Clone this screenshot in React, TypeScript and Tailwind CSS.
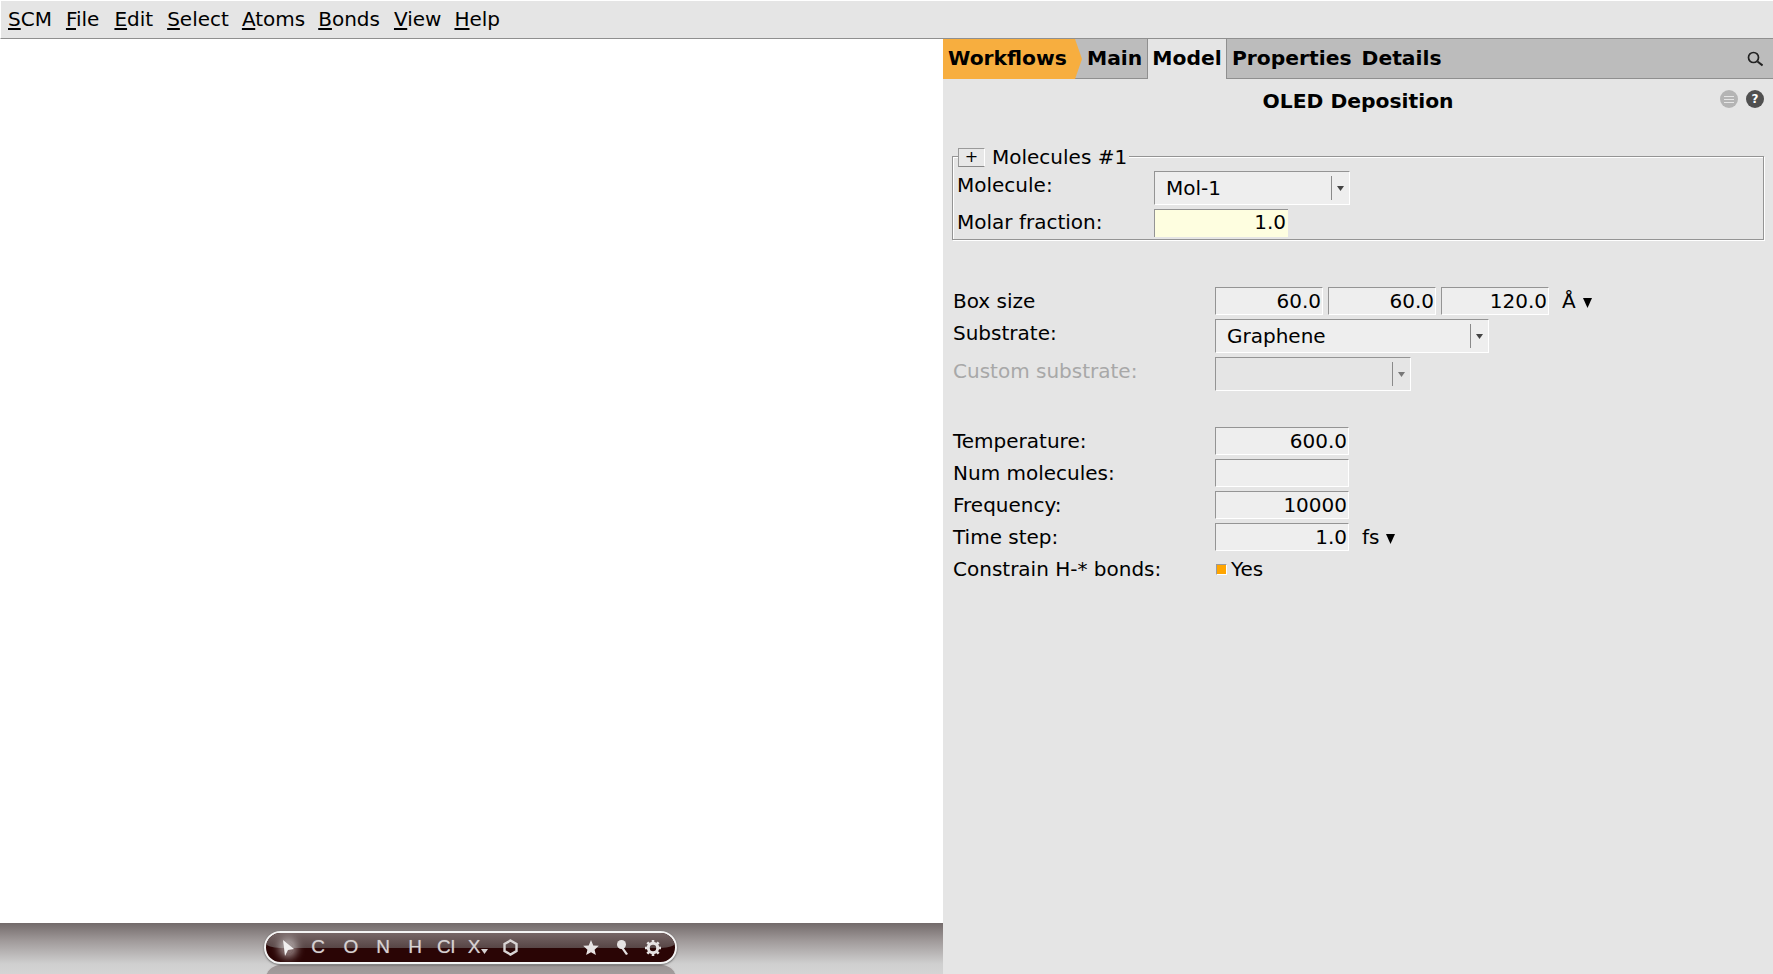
const menus = [
  ['S', 'CM', ''],
  ['F', 'ile', 'ml-[14px]'],
  ['E', 'dit', 'ml-[15px]'],
  ['S', 'elect', 'ml-[14px]'],
  ['A', 'toms', 'ml-[13px]'],
  ['B', 'onds', 'ml-[13px]'],
  ['V', 'iew', 'ml-[14px]'],
  ['H', 'elp', 'ml-[13px]'],
];

function TextField({ value, width = 'w-[134px]' }: { value?: string; width?: string }) {
  return (
    <div className={`${width} h-7 shrink-0 bg-[#eeeeee] border border-t-[#949494] border-l-[#949494] border-r-white border-b-white flex items-center justify-end pr-[1px]`}>
      {value}
    </div>
  );
}

function Combo({ value, width, disabled }: { value?: string; width: string; disabled?: boolean }) {
  return (
    <div className={`${width} h-[34px] shrink-0 border border-t-[#949494] border-l-[#949494] border-r-white border-b-white flex items-center ${disabled ? 'bg-[#e5e5e5]' : 'bg-[#eeeeee]'}`}>
      <span className="flex-1 pl-[11px] pb-[1px]">{value}</span>
      <div className="w-[18px] h-[24px] border-l border-[#8a8a8a] flex items-center justify-center">
        <svg width="7" height="5" viewBox="0 0 7 5"><path d="M0 0h7L3.500 5z" fill={disabled ? '#777777' : '#444444'} /></svg>
      </div>
    </div>
  );
}

function Row({ label, children }: { label: string; children?: React.ReactNode }) {
  return (
    <div className="flex items-center h-7 mb-1">
      <span className="w-[262px] shrink-0">{label}</span>
      {children}
    </div>
  );
}

function DownArrow({ ml }: { ml: string }) {
  return <svg className={`${ml} mt-[3px]`} width="9" height="10" viewBox="0 0 9 10"><path d="M0 0h9L4.500 10z" fill="#000000" /></svg>;
}

function Toolbar() {
  const atoms = [
    { t: 'C', ml: 'ml-[3px]' },
    { t: 'O', ml: 'ml-[5px]' },
    { t: 'N', ml: 'ml-[4px]' },
    { t: 'H', ml: 'ml-[4px]' },
    { t: 'Cl', ml: 'ml-[3px]' },
  ];
  return (
    <div className="h-[51px] mt-auto bg-[linear-gradient(180deg,#736a6a_0%,#a09a9a_35%,#cfcfcf_80%,#d4d4d4_100%)] flex justify-center pt-2 relative overflow-hidden">
      <div className="absolute left-[266px] top-[40px] w-[410px] h-[30px] rounded-[17px] border-t-2 border-[#d2d0d0] bg-[linear-gradient(180deg,#9b9494,#b0abab)]" />
      <div className="relative mr-[2px] w-[413px] h-[33px] rounded-[17px] border-2 border-[#f4f4f4] bg-[#2a0505] shadow-[0_1px_2px_rgba(0,0,0,0.5)] flex items-center pl-[9px] text-[#d6d2d2] text-[19px] font-['Liberation_Sans',sans-serif] overflow-hidden [text-shadow:0_0_1px_rgba(214,210,210,0.6)]">
        <div className="absolute inset-x-0 top-0 h-[15px] rounded-b-[14px_5px] bg-[linear-gradient(180deg,#766666_0%,#574545_100%)]" />
        <div className="relative w-[26px] flex justify-center">
          <div className="rounded-full shadow-[0_0_8px_4px_rgba(255,255,255,0.55)] bg-white/40 w-[10px] h-[12px] flex items-center justify-center">
            <svg width="14" height="16" viewBox="0 0 14 16" className="shrink-0"><path d="M2 0l11 9-6 1-3 6z" fill="#f2f0f0" /></svg>
          </div>
        </div>
        {atoms.map((a) => (
          <span key={a.t} className={`relative w-[28px] text-center ${a.ml}`}>{a.t}</span>
        ))}
        <span className="relative w-[28px] ml-[4px] flex justify-center items-center">
          X
          <svg className="mt-[8px] ml-[1px]" width="7" height="5" viewBox="0 0 7 5"><path d="M0 0h7L3.500 5z" fill="#d6d2d2" /></svg>
        </span>
        <span className="relative w-[28px] ml-[4px] flex justify-center">
          <svg width="15" height="17" viewBox="0 0 15 17"><path d="M7.500 1.500l6 3.500v7l-6 3.500-6-3.500V5z" fill="none" stroke="#d8d4d4" strokeWidth="2.400" /></svg>
        </span>
        <span className="relative w-[28px] ml-[53px] flex justify-center">
          <svg width="16" height="15" viewBox="0 0 24 23"><path d="M12 0l3.500 8.300 8.500.7-6.500 5.800 2 8.200L12 18.600 4.500 23l2-8.200L0 9l8.500-.7z" fill="#e6e2e2" /></svg>
        </span>
        <span className="relative w-[28px] ml-[4px] flex justify-center">
          <svg width="13" height="15" viewBox="0 0 13 15"><circle cx="4.500" cy="4.500" r="4.500" fill="#e6e2e2" /><path d="M6 7l5 7-2 1-5-7z" fill="#e6e2e2" /></svg>
        </span>
        <span className="relative w-[28px] ml-[2px] flex justify-center">
          <svg width="16" height="16" viewBox="0 0 16 16"><circle cx="8" cy="8" r="4.700" fill="none" stroke="#e6e2e2" strokeWidth="3" /><path d="M8 0v3M8 13v3M0 8h3M13 8h3M2.300 2.300l2.200 2.200M11.500 11.500l2.200 2.200M2.300 13.700l2.200-2.200M11.500 4.500l2.200-2.200" stroke="#e6e2e2" strokeWidth="2.600" /></svg>
        </span>
      </div>
    </div>
  );
}

export default function App() {
  return (
    <div className="w-screen h-screen overflow-hidden flex flex-col bg-[#e5e5e5] text-black text-[20px] font-['DejaVu_Sans',sans-serif]">
      <div className="h-[39px] shrink-0 border-t border-l border-white border-b border-b-[#8f8f8f] flex items-center pl-[7px] pb-[2px]">
        {menus.map(([u, rest, ml], i) => (
          <span key={i} className={ml}><span className="underline underline-offset-2">{u}</span>{rest}</span>
        ))}
      </div>

      <div className="flex-1 flex min-h-0">
        <div className="w-[943px] shrink-0 flex flex-col bg-white">
          <Toolbar />
        </div>

        <div className="flex-1 min-w-0">
          <div className="h-10 bg-[#bcbcbc] border-b border-[#8f8f8f] flex items-stretch font-bold text-[20.3px]">
            <div className="w-[139px] -mb-px bg-[#f7ae3f] [clip-path:polygon(0_0,132px_0,100%_50%,132px_100%,0_100%)] flex items-center pl-[5px] pb-[2px]">Workflows</div>
            <div className="ml-[-7px] w-[72px] flex items-center pl-[12px]">Main</div>
            <div className="w-[80px] -mb-px bg-[#e5e5e5] border-l border-r border-[#8f8f8f] flex items-center justify-center pb-[2px]">Model</div>
            <div className="flex items-center pl-[5px]">Properties</div>
            <div className="flex items-center pl-[10px]">Details</div>
            <div className="ml-auto flex items-center pr-[10px]">
              <svg width="16" height="16" viewBox="0 0 16 16"><circle cx="6.500" cy="6.500" r="5" fill="none" stroke="#222222" strokeWidth="1.700" /><path d="M10.500 10.500l5 4" stroke="#222222" strokeWidth="2" /></svg>
            </div>
          </div>

          <div className="relative h-[47px] flex items-center justify-center font-bold text-[20.3px] pb-[2px]">
            OLED Deposition
            <div className="absolute right-[9px] top-[11px] flex gap-2">
              <div className="w-[18px] h-[18px] rounded-full bg-[#b4b4b4] flex flex-col items-center justify-center gap-[2px]">
                <div className="w-[10px] h-px bg-[#e5e5e5]" />
                <div className="w-[10px] h-px bg-[#e5e5e5]" />
                <div className="w-[10px] h-px bg-[#e5e5e5]" />
              </div>
              <div className="w-[18px] h-[18px] rounded-full bg-[#505050] flex items-center justify-center text-white text-[12px] font-bold leading-none">?</div>
            </div>
          </div>

          <div className="relative mt-[30px] ml-[9px] mr-[9px] h-[84px] border border-[#949494] shadow-[1px_1px_0_white,inset_1px_1px_0_white] pl-[4px] pt-[14px]">
            <div className="absolute left-[5px] -top-[10px] flex items-center bg-[#e5e5e5] pr-[2px]">
              <div className="w-[27px] h-[19px] border border-[#9a9a9a] border-r-white border-b-[#888888] bg-[#e8e8e8] flex items-center justify-center text-[16px] leading-none">+</div>
              <span className="ml-[7px] leading-none">Molecules #1</span>
            </div>
            <div className="flex items-start">
              <span className="w-[197px] shrink-0 -mt-px">Molecule:</span>
              <Combo value="Mol-1" width="w-[196px]" />
            </div>
            <div className="flex items-center mt-[4px]">
              <span className="w-[197px] shrink-0 h-7 leading-[26px]">Molar fraction:</span>
              <div className="w-[134px] h-7 bg-[#fefee0] border-t border-l border-t-[#949494] border-l-[#949494] text-right pr-[2px] leading-[25px]">1.0</div>
            </div>
          </div>

          <div className="ml-[10px] mt-[47px]">
            <div className="flex items-center h-7">
              <span className="w-[262px] shrink-0">Box size</span>
              <div className="flex gap-[5px]">
                <TextField value="60.0" width="w-[108px]" />
                <TextField value="60.0" width="w-[108px]" />
                <TextField value="120.0" width="w-[108px]" />
              </div>
              <span className="ml-[13px]">Å</span>
              <DownArrow ml="ml-[7px]" />
            </div>
            <div className="flex items-center h-[34px] mt-1">
              <span className="w-[262px] shrink-0 -mt-[6px]">Substrate:</span>
              <Combo value="Graphene" width="w-[274px]" />
            </div>
            <div className="flex items-center h-[34px] mt-1">
              <span className="w-[262px] shrink-0 text-[#a8a8a8] pb-[6px]">Custom substrate:</span>
              <Combo width="w-[196px]" disabled />
            </div>

            <div className="mt-[36px]">
              <Row label="Temperature:"><TextField value="600.0" /></Row>
              <Row label="Num molecules:"><TextField /></Row>
              <Row label="Frequency:"><TextField value="10000" /></Row>
              <Row label="Time step:">
                <TextField value="1.0" />
                <span className="ml-[13px]">fs</span>
                <DownArrow ml="ml-[7px]" />
              </Row>
              <div className="flex items-center h-7">
                <span className="w-[262px] shrink-0">Constrain H-* bonds:</span>
                <div className="w-[11px] h-[11px] ml-px bg-[#ffa500] border border-t-[#9a9a9a] border-l-[#9a9a9a] border-r-white border-b-white" />
                <span className="ml-[4px]">Yes</span>
              </div>
            </div>
          </div>
        </div>
      </div>
    </div>
  );
}
